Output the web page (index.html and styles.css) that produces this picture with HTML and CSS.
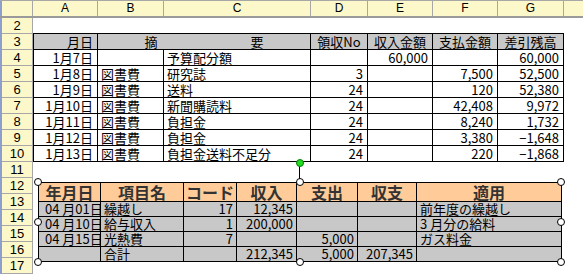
FILE: index.html
```html
<!DOCTYPE html>
<html lang="ja">
<head>
<meta charset="utf-8">
<link rel="stylesheet" href="styles.css">
</head>
<body>
<div class="sheet">
  <div class="colhead">
    <div class="corner"></div>
    <div class="ch c-a">A</div>
    <div class="ch c-b">B</div>
    <div class="ch c-c">C</div>
    <div class="ch c-d">D</div>
    <div class="ch c-e">E</div>
    <div class="ch c-f">F</div>
    <div class="ch c-g">G</div>
    <div class="ch c-rest"></div>
  </div>
  <div class="body">
    <div class="rowhead">
      <div class="rh">2</div><div class="rh">3</div><div class="rh">4</div><div class="rh">5</div>
      <div class="rh">6</div><div class="rh">7</div><div class="rh">8</div><div class="rh">9</div>
      <div class="rh">10</div><div class="rh">11</div><div class="rh">12</div><div class="rh">13</div>
      <div class="rh">14</div><div class="rh">15</div><div class="rh">16</div><div class="rh">17</div>
    </div>
    <div class="cells">
      <div class="ledger">
        <div class="lc hd r">月日</div>
        <div class="lc hd span2"><span>摘</span><span>要</span></div>
        <div class="lc hd ctr">領収No</div>
        <div class="lc hd ctr">収入金額</div>
        <div class="lc hd ctr">支払金額</div>
        <div class="lc hd ctr">差引残高</div>

        <div class="lc r">1月7日</div><div class="lc"></div><div class="lc">予算配分額</div><div class="lc r"></div><div class="lc r">60,000</div><div class="lc r"></div><div class="lc r">60,000</div>
        <div class="lc r">1月8日</div><div class="lc">図書費</div><div class="lc">研究誌</div><div class="lc r">3</div><div class="lc r"></div><div class="lc r">7,500</div><div class="lc r">52,500</div>
        <div class="lc r">1月9日</div><div class="lc">図書費</div><div class="lc">送料</div><div class="lc r">24</div><div class="lc r"></div><div class="lc r">120</div><div class="lc r">52,380</div>
        <div class="lc r">1月10日</div><div class="lc">図書費</div><div class="lc">新聞購読料</div><div class="lc r">24</div><div class="lc r"></div><div class="lc r">42,408</div><div class="lc r">9,972</div>
        <div class="lc r">1月11日</div><div class="lc">図書費</div><div class="lc">負担金</div><div class="lc r">24</div><div class="lc r"></div><div class="lc r">8,240</div><div class="lc r">1,732</div>
        <div class="lc r">1月12日</div><div class="lc">図書費</div><div class="lc">負担金</div><div class="lc r">24</div><div class="lc r"></div><div class="lc r">3,380</div><div class="lc r">−1,648</div>
        <div class="lc r">1月13日</div><div class="lc">図書費</div><div class="lc">負担金送料不足分</div><div class="lc r">24</div><div class="lc r"></div><div class="lc r">220</div><div class="lc r">−1,868</div>
      </div>

      <div class="object">
        <div class="obj-grid">
          <div class="oh">年月日</div><div class="oh">項目名</div><div class="oh">コード</div><div class="oh">収入</div><div class="oh">支出</div><div class="oh">収支</div><div class="oh">適用</div>
          <div class="oc pl">04 月01日</div><div class="oc">繰越し</div><div class="oc r">17</div><div class="oc r">12,345</div><div class="oc r"></div><div class="oc r"></div><div class="oc">前年度の繰越し</div>
          <div class="oc pl">04 月10日</div><div class="oc">給与収入</div><div class="oc r">1</div><div class="oc r">200,000</div><div class="oc r"></div><div class="oc r"></div><div class="oc">3 月分の給料</div>
          <div class="oc pl">04 月15日</div><div class="oc">光熱費</div><div class="oc r">7</div><div class="oc r"></div><div class="oc r">5,000</div><div class="oc r"></div><div class="oc">ガス料金</div>
          <div class="oc pl"></div><div class="oc">合計</div><div class="oc r"></div><div class="oc r">212,345</div><div class="oc r">5,000</div><div class="oc r">207,345</div><div class="oc"></div>
        </div>
        <span class="stem"></span>
        <span class="handle rot"></span>
        <span class="handle h-tl"></span>
        <span class="handle h-tm"></span>
        <span class="handle h-tr"></span>
        <span class="handle h-ml"></span>
        <span class="handle h-mr"></span>
        <span class="handle h-bl"></span>
        <span class="handle h-bm"></span>
        <span class="handle h-br"></span>
      </div>
    </div>
  </div>
</div>
</body>
</html>
```

FILE: styles.css
```css
* { box-sizing: border-box; }
html, body { margin: 0; padding: 0; background: #fff; }
body {
  width: 583px;
  height: 275px;
  overflow: hidden;
  font-family: "Noto Sans CJK JP", "Liberation Sans", sans-serif;
  font-size: 13px;
  color: #000;
}
.sheet { width: 583px; }

/* column header */
.colhead {
  display: flex;
  height: 18px;
  border-top: 1px solid #a7a7a7;
  border-bottom: 2px solid #9a9a9a;
  background: #fdf8c9;
}
.corner {
  width: 33px;
  flex: none;
  border-left: 2px solid #8c9fcf;
  border-right: 1px solid #a7a7a7;
}
.ch {
  flex: none;
  border-right: 1px solid #a7a7a7;
  text-align: center;
  line-height: 15px;
  font-family: "Liberation Sans", sans-serif;
  font-size: 12px;
}
.c-a { width: 65px; }
.c-b { width: 66px; }
.c-c { width: 147px; }
.c-d { width: 57px; }
.c-e { width: 65px; }
.c-f { width: 65px; }
.c-g { width: 66px; }
.c-rest { flex: 1; border-right: none; }

/* body */
.body { display: flex; }
.rowhead {
  width: 33px;
  flex: none;
  background: #fdf8c9;
  border-left: 2px solid #8c9fcf;
  border-right: 1px solid #a7a7a7;
}
.rh {
  height: 16px;
  border-bottom: 1px solid #a7a7a7;
  text-align: center;
  line-height: 15px;
  font-family: "Liberation Sans", sans-serif;
  font-size: 13px;
}
.cells {
  position: relative;
  flex: 1;
  padding-top: 15px;
}

/* ledger table */
.ledger {
  display: grid;
  grid-template-columns: 63px 65px 146px 56px 64px 64px 65px;
  grid-auto-rows: 15px;
  gap: 1px;
  padding: 1px;
  background: #000;
  width: max-content;
}
.lc {
  background: #fff;
  line-height: 15px;
  padding: 0 3px;
  white-space: nowrap;
}
.lc.hd { background: #c8c8c8; }
.lc.r { text-align: right; padding-right: 4px; }
.lc.ctr { text-align: center; padding: 0; }
.lc.span2 {
  grid-column: span 2;
  display: flex;
  justify-content: space-around;
  padding: 0 0 0 0;
}

/* floating object */
.object {
  position: absolute;
  left: 5px;
  top: 164px;
  width: 524px;
}
.obj-grid {
  display: grid;
  grid-template-columns: 61px 82px 52px 59px 60px 58px 144px;
  grid-template-rows: 18px 14px 14px 14px 14px;
  gap: 1px;
  padding: 1px;
  background: #000;
}
.oh {
  background: #ffcc99;
  color: #333;
  font-weight: bold;
  font-size: 16px;
  line-height: 18px;
  text-align: center;
  white-space: nowrap;
}
.oc {
  background: #c8c8c8;
  line-height: 14px;
  padding: 0 3px;
  white-space: nowrap;
}
.oc.r { text-align: right; padding-right: 3px; }
.oc.pl { padding-left: 6px; }

.stem {
  position: absolute;
  left: 261px;
  top: -17px;
  width: 1px;
  height: 17px;
  background: #000;
}
.handle {
  position: absolute;
  width: 8px;
  height: 8px;
  border-radius: 50%;
  background: #fff;
  border: 1px solid #000;
  margin: -4px 0 0 -4px;
}
.handle.rot { left: 262px; top: -19px; background: #22dd22; border-color: #0a7a0a; }
.h-tl { left: 0; top: 0; }
.h-tm { left: 262px; top: 0; }
.h-tr { left: 523px; top: 0; }
.h-ml { left: 0; top: 40px; }
.h-mr { left: 523px; top: 40px; }
.h-bl { left: 0; top: 80px; }
.h-bm { left: 262px; top: 80px; }
.h-br { left: 523px; top: 80px; }
```
